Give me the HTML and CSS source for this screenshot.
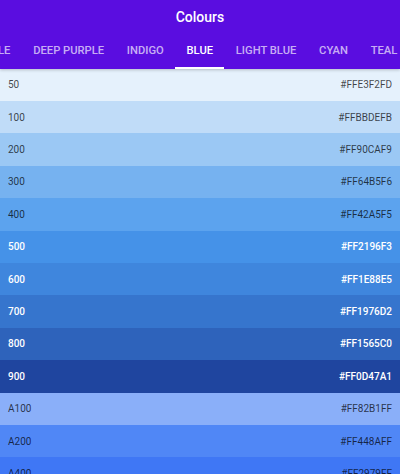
FILE: index.html
```html
<!DOCTYPE html>
<html>
<head>
<meta charset="utf-8">
<link rel="stylesheet" href="styles.css">
</head>
<body>
<div class="app">
  <header class="appbar">
    <div class="title">Colours</div>
    <nav class="tabs">
      <div class="strip">
        <div class="tab">PURPLE</div>
        <div class="tab">DEEP PURPLE</div>
        <div class="tab">INDIGO</div>
        <div class="tab active">BLUE</div>
        <div class="tab">LIGHT BLUE</div>
        <div class="tab">CYAN</div>
        <div class="tab">TEAL</div>
        <div class="tab">GREEN</div>
      </div>
    </nav>
  </header>
  <main class="list">
    <div class="row c50"><span>50</span><span>#FFE3F2FD</span></div>
    <div class="row c100"><span>100</span><span>#FFBBDEFB</span></div>
    <div class="row c200"><span>200</span><span>#FF90CAF9</span></div>
    <div class="row c300"><span>300</span><span>#FF64B5F6</span></div>
    <div class="row c400"><span>400</span><span>#FF42A5F5</span></div>
    <div class="row c500 light"><span>500</span><span>#FF2196F3</span></div>
    <div class="row c600 light"><span>600</span><span>#FF1E88E5</span></div>
    <div class="row c700 light"><span>700</span><span>#FF1976D2</span></div>
    <div class="row c800 light"><span>800</span><span>#FF1565C0</span></div>
    <div class="row c900 light"><span>900</span><span>#FF0D47A1</span></div>
    <div class="row a100"><span>A100</span><span>#FF82B1FF</span></div>
    <div class="row a200"><span>A200</span><span>#FF448AFF</span></div>
    <div class="row a400"><span>A400</span><span>#FF2979FF</span></div>
    <div class="row a700 light"><span>A700</span><span>#FF2962FF</span></div>
  </main>
</div>
</body>
</html>
```
FILE: styles.css
```css
html, body {
  margin: 0;
  padding: 0;
}
body {
  width: 400px;
  height: 474px;
  overflow: hidden;
  font-family: Roboto, "Noto Sans", "Liberation Sans", sans-serif;
  background: #fafafa;
}
.app {
  display: flex;
  flex-direction: column;
  height: 474px;
}
.appbar {
  position: relative;
  z-index: 2;
  background: #5a0de0;
  height: 68.6px;
  box-shadow: 0 1px 3px rgba(0,0,0,0.22);
  display: flex;
  flex-direction: column;
}
.title {
  height: 34px;
  display: flex;
  align-items: center;
  justify-content: center;
  color: #fff;
  font-size: 14px;
  font-weight: 500;
}
.tabs {
  flex: 1;
  overflow: hidden;
}
.strip {
  display: flex;
  height: 100%;
  margin-left: -42px;
}
.tab {
  flex: none;
  padding: 0 11.4px;
  display: flex;
  align-items: center;
  font-size: 11.2px;
  font-weight: 500;
  color: rgba(255,255,255,0.68);
  box-sizing: border-box;
  border-bottom: 2px solid transparent;
  padding-top: 1px;
}
.tab.active {
  color: #fff;
  border-bottom-color: #fff;
}
.list {
  flex: 1;
  overflow: hidden;
}
.row {
  height: 32.4px;
  display: flex;
  align-items: center;
  justify-content: space-between;
  padding: 0 8px;
  font-size: 10px;
  color: rgba(0,0,0,0.72);
}
.row.light {
  color: #fff;
  font-weight: 500;
}
.c50 { background: #e5f1fc; }
.c100 { background: #c0dcf8; }
.c200 { background: #9bc8f4; }
.c300 { background: #76b2f0; }
.c400 { background: #5ca3ee; }
.c500 { background: #4592e8; }
.c600 { background: #3f86dd; }
.c700 { background: #3675cd; }
.c800 { background: #2e63bb; }
.c900 { background: #1f459f; }
.a100 { background: #8aaff9; }
.a200 { background: #5087f6; }
.a400 { background: #3f77f5; }
.a700 { background: #3f62f3; }
```
